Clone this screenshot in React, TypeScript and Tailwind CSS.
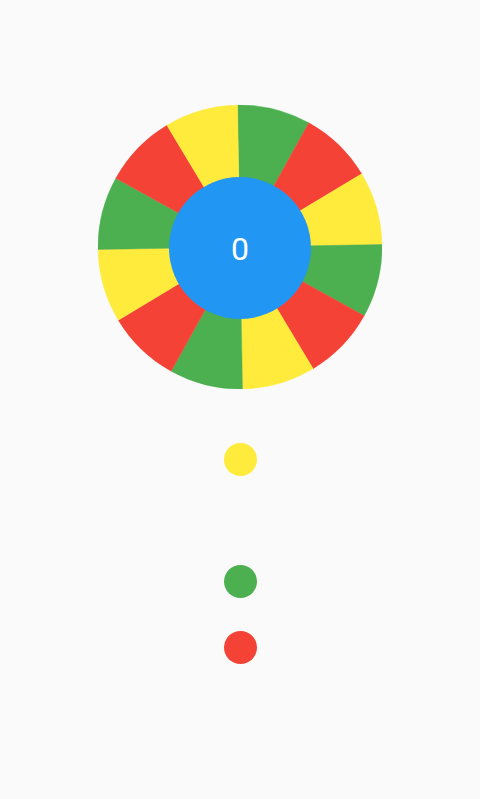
import React from "react";

const COLORS = ["#4CAF50", "#F44336", "#FFEB3B"];

function sectorPath(cx: number, cy: number, r: number, a0: number, a1: number) {
  const rad = (d: number) => (d * Math.PI) / 180;
  const x0 = cx + r * Math.sin(rad(a0));
  const y0 = cy - r * Math.cos(rad(a0));
  const x1 = cx + r * Math.sin(rad(a1));
  const y1 = cy - r * Math.cos(rad(a1));
  return `M ${cx} ${cy} L ${x0.toFixed(3)} ${y0.toFixed(3)} A ${r} ${r} 0 0 1 ${x1.toFixed(3)} ${y1.toFixed(3)} Z`;
}

function Wheel() {
  const segs = Array.from({ length: 12 }, (_, i) => i);
  return (
    <div className="relative w-[284px] h-[284px]">
      <svg width="284" height="284" viewBox="0 0 284 284" className="block">
        <g transform="rotate(-1 142 142)">
          {segs.map((i) => (
            <path
              key={i}
              d={sectorPath(142, 142, 142, i * 30, (i + 1) * 30)}
              fill={COLORS[i % 3]}
              stroke={COLORS[i % 3]}
              strokeWidth="0.4"
            />
          ))}
        </g>
      </svg>
      <div className="absolute left-[71px] top-[72px] w-[142px] h-[142px] rounded-full bg-[#2196F3] flex items-center justify-center">
        <span className="text-white text-[32px] leading-none font-['Roboto',sans-serif] mt-[2px]">0</span>
      </div>
    </div>
  );
}

export default function App() {
  return (
    <div className="w-[480px] h-[799px] bg-[#FAFAFA] flex flex-col items-center overflow-hidden">
      <div className="mt-[105px]">
        <Wheel />
      </div>
      <div className="mt-[54px] w-[33px] h-[33px] rounded-full bg-[#FFEB3B]" />
      <div className="mt-[89px] w-[33px] h-[33px] rounded-full bg-[#4CAF50]" />
      <div className="mt-[33px] w-[33px] h-[33px] rounded-full bg-[#F44336]" />
    </div>
  );
}
